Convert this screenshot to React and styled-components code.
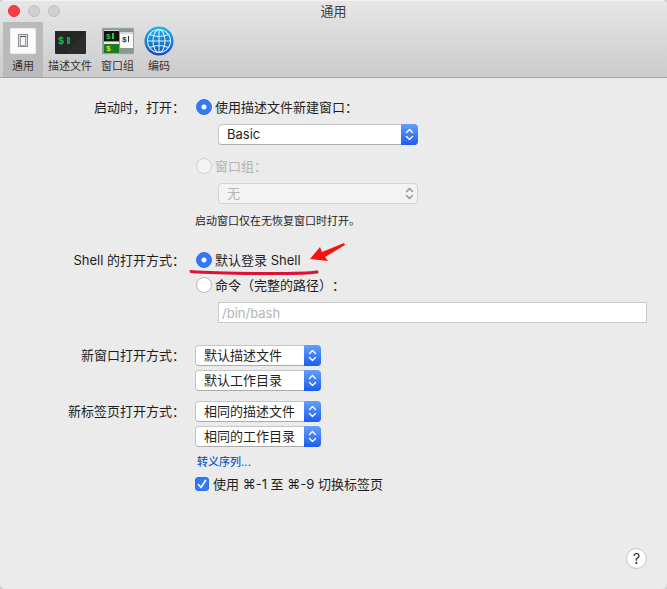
import React, { useState } from 'react';
import styled, { createGlobalStyle, css } from 'styled-components';

const GlobalStyle = createGlobalStyle`
    * {
        box-sizing: border-box;
    }

    body {
        margin: 0;
        background: #cfcfcf;
        color: #1f1f1f;
        font-family: Inter, "Noto Sans CJK SC", sans-serif;
        font-size: 13px;
        line-height: 16px;
        text-spacing-trim: space-all;
    }

    button, input, select {
        margin: 0;
        color: inherit;
        font: inherit;
    }
`;

const Window = styled.div`
    display: flex;
    flex-direction: column;
    min-height: 100vh;
    overflow: hidden;
    background: #ebebeb;
    border-radius: 5px;
`;

const Header = styled.header`
    background: linear-gradient(#e7e7e7, #cbcbcb);
    border-bottom: 1px solid #a3a3a3;
    box-shadow: inset 0 1px 0 #f3f3f3;
`;

const TitleBar = styled.div`
    display: grid;
    grid-template-columns: 1fr auto 1fr;
    align-items: center;
    height: 22px;
    padding: 0 8px;
`;

const Lights = styled.div`
    display: flex;
    gap: 8px;
`;

const Light = styled.button`
    width: 12px;
    height: 12px;
    padding: 0;
    background: ${props => props.$close ? '#fc3d46' : '#d0d0d0'};
    border: 1px solid ${props => props.$close ? '#e0343c' : '#bdbdbd'};
    border-radius: 50%;
`;

const Title = styled.h1`
    margin: 0;
    color: #3c3c3c;
    font-size: 13px;
    font-weight: 400;
`;

const Toolbar = styled.nav`
    display: flex;
    gap: 1px;
    padding: 0 3px;
`;

const ToolbarButton = styled.button`
    display: flex;
    flex-direction: column;
    align-items: center;
    min-width: 40px;
    height: 55px;
    padding: 3px 4px 0;
    background: ${props => props.$active ? '#bababa' : 'transparent'};
    border: 0;
    color: #333333;
    font-size: 11px;
    line-height: 18px;

    svg {
        display: block;
        flex: none;
    }
`;

const Form = styled.form`
    display: flex;
    flex: 1;
    flex-direction: column;
    padding: 21px 20px 20px 0;
`;

const Group = styled.div`
    display: grid;
    grid-template-columns: 185px 1fr;
    column-gap: 10px;
    margin-bottom: ${props => props.$tight ? '10px' : '22px'};
`;

const GroupLabel = styled.div`
    line-height: ${props => props.$tall ? '21px' : '16px'};
    text-align: right;
`;

const Fields = styled.div`
    display: flex;
    flex-direction: column;
    align-items: flex-start;
    gap: ${props => props.$tight ? '4px' : '9px'};
`;

const Choice = styled.label`
    position: relative;
    display: flex;
    align-items: center;
    gap: 3px;
    padding-left: 1px;
    color: ${props => props.$disabled ? '#b4b4b4' : 'inherit'};
`;

const Radio = styled.input`
    appearance: none;
    width: 16px;
    height: 16px;
    background: #ffffff;
    border: 1px solid #bcbcbc;
    border-radius: 50%;

    &:checked {
        background: radial-gradient(circle, #ffffff 2px, #3478f6 3px);
        border-color: #2f6fe8;
    }

    &:disabled {
        background: #f3f3f3;
        border-color: #d0d0d0;
    }
`;

const Indent = styled.div`
    align-self: stretch;
    padding: 0 0 ${props => props.$spaced ? '4px' : '0'} 23px;
`;

const SelectBox = styled.div`
    position: relative;
    width: ${props => props.$wide ? '200px' : '126px'};
    height: 21px;

    svg {
        position: absolute;
        top: 0;
        right: 0;
        pointer-events: none;
    }
`;

const SelectInput = styled.select`
    appearance: none;
    display: block;
    width: 100%;
    height: 21px;
    padding: 0 20px 2px 8px;
    background: #ffffff;
    border: 1px solid #c6c6c6;
    border-bottom-color: #ababab;
    border-radius: 4px;

    ${props => props.disabled && css`
        background: #f3f3f3;
        border-color: #d3d3d3;
        color: #b4b4b4;
        opacity: 1;
    `}
`;

const Note = styled.p`
    margin: 0;
    font-size: 11px;
    line-height: 17px;
`;

const PathInput = styled.input`
    display: block;
    width: 100%;
    height: 21px;
    padding: 0 3px;
    background: #ffffff;
    border: 1px solid #c8c8c8;

    &:disabled {
        color: #b4b4b4;
    }
`;

const Annotation = styled.svg`
    position: absolute;
    top: -12px;
    left: -6px;
    overflow: visible;
    pointer-events: none;
`;

const Extras = styled.div`
    display: flex;
    flex-direction: column;
    align-items: flex-start;
    gap: 6px;
    padding-top: 3px;
`;

const Link = styled.a`
    padding-left: 2px;
    color: #1b5bbf;
    font-size: 11px;
    font-weight: 500;
    text-decoration: none;
`;

const CheckLabel = styled.label`
    display: grid;
    grid-template-columns: 14px auto;
    align-items: center;
    column-gap: 4px;

    input, svg {
        grid-area: 1 / 1;
    }

    span {
        grid-column: 2;
    }

    svg {
        pointer-events: none;
    }
`;

const Checkbox = styled.input`
    appearance: none;
    width: 14px;
    height: 14px;
    background: #ffffff;
    border: 1px solid #bcbcbc;
    border-radius: 3px;

    &:checked {
        background: #3478f6;
        border-color: #2f6fe8;
    }
`;

const Footer = styled.footer`
    display: flex;
    justify-content: flex-end;
    margin-top: auto;
`;

const HelpButton = styled.button`
    width: 21px;
    height: 21px;
    padding: 0;
    background: #ffffff;
    border: 1px solid #c4c4c4;
    border-radius: 50%;
    font-size: 14px;
    line-height: 19px;
`;

const GeneralIcon = () => (
    <svg width="32" height="32" viewBox="0 0 32 32">
        <rect x="3" y="3" width="26" height="26" rx="1" fill="#fbfbfb" stroke="#c6c6c6" strokeWidth="0.6" />
        <rect x="11.5" y="9.5" width="9" height="12" fill="#d9dce0" stroke="#8d9095" />
        <rect x="13.5" y="11.5" width="5" height="9" fill="#f6f6f7" stroke="#8b8e93" strokeWidth="0.8" />
        <path d="M13 11.5h6" stroke="#55585d" />
    </svg>
);

const ProfileIcon = () => (
    <svg width="32" height="32" viewBox="0 0 32 32">
        <rect x="1" y="3" width="31" height="26" rx="1" fill="#262828" />
        <rect x="1" y="3" width="31" height="3" fill="#dedede" />
        <path d="M32 6v23H12z" fill="#3a3c3c" opacity="0.3" />
        <text x="4" y="19" fill="#22c04c" fontFamily="Liberation Mono, monospace" fontSize="10" fontWeight="700">$</text>
        <rect x="13" y="12" width="3" height="7" fill="#1a9c3c" />
    </svg>
);

const WindowGroupIcon = () => (
    <svg width="32" height="32" viewBox="0 0 32 32">
        <rect x="0" y="3" width="32" height="26" fill="#8a9794" stroke="#b4bab8" strokeWidth="0.6" />
        <rect x="2" y="5" width="15" height="11" fill="#101511" />
        <rect x="2" y="5" width="15" height="1" fill="#d7dad8" />
        <text x="4" y="14" fill="#25c44c" fontFamily="Liberation Mono, monospace" fontSize="8" fontWeight="700">$</text>
        <rect x="10" y="8" width="2" height="6" fill="#25c44c" />
        <rect x="2" y="17" width="15" height="11" fill="#1e7a1c" />
        <rect x="2" y="17" width="15" height="2" fill="#e8e9e8" />
        <text x="4" y="26" fill="#d5e83a" fontFamily="Liberation Mono, monospace" fontSize="8" fontWeight="700">$</text>
        <rect x="18" y="7" width="13" height="16" fill="#fafafa" />
        <rect x="18" y="7" width="13" height="2" fill="#d4d6d6" />
        <text x="20" y="17" fill="#333333" fontFamily="Liberation Mono, monospace" fontSize="8" fontWeight="700">$</text>
        <rect x="26" y="11" width="1" height="6" fill="#333333" />
    </svg>
);

const EncodingIcon = () => (
    <svg width="32" height="32" viewBox="0 0 32 32">
        <defs>
            <linearGradient id="globe" x1="0" y1="0" x2="0" y2="1">
                <stop offset="0" stopColor="#19b9ee" />
                <stop offset="1" stopColor="#1746bd" />
            </linearGradient>
        </defs>
        <circle cx="16" cy="16" r="14.5" fill="url(#globe)" />
        <g fill="none" stroke="#d9f1ff" strokeWidth="1.1">
            <circle cx="16" cy="16" r="11.5" />
            <ellipse cx="16" cy="16" rx="6" ry="11.5" />
            <path d="M16 4.5v23M4.5 16h23M6.5 9.5q9.5 4 19 0M6.5 22.5q9.5-4 19 0" />
        </g>
    </svg>
);

const Stepper = ({ disabled }) => (
    <svg width="17" height="21" viewBox="0 0 17 21">
        <defs>
            <linearGradient id="stepper" x1="0" y1="0" x2="0" y2="1">
                <stop offset="0" stopColor="#659ff8" />
                <stop offset="1" stopColor="#1c5cf1" />
            </linearGradient>
        </defs>
        {
            disabled ?
                null
            : <path d="M0 0h13a4 4 0 0 1 4 4v13a4 4 0 0 1-4 4H0z" fill="url(#stepper)" />
        }
        <path
            d="M5.5 8.5l3-3 3 3M5.5 12.500l3 3 3-3"
            fill="none"
            stroke={disabled ? '#8f8f8f' : '#ffffff'}
            strokeLinecap="round"
            strokeLinejoin="round"
            strokeWidth="1.4"
        />
    </svg>
);

const PopUp = ({ label, options, disabled, wide }) => (
    <SelectBox $wide={wide}>
        <SelectInput aria-label={label} disabled={disabled}>
            {options.map(option => <option key={option}>{option}</option>)}
        </SelectInput>
        <Stepper disabled={disabled} />
    </SelectBox>
);

const tabs = [
    { name: '通用', Icon: GeneralIcon },
    { name: '描述文件', Icon: ProfileIcon },
    { name: '窗口组', Icon: WindowGroupIcon },
    { name: '编码', Icon: EncodingIcon },
];

const App = () => {
    const [activeTab, setActiveTab] = useState('通用');
    const [shell, setShell] = useState('login');
    const [switchTabs, setSwitchTabs] = useState(true);

    return (
        <Window>
            <GlobalStyle />
            <Header>
                <TitleBar>
                    <Lights>
                        <Light $close aria-label="关闭" />
                        <Light aria-label="最小化" disabled />
                        <Light aria-label="缩放" disabled />
                    </Lights>
                    <Title>通用</Title>
                </TitleBar>
                <Toolbar>
                    {
                        tabs.map(({ name, Icon }) => (
                            <ToolbarButton
                                key={name}
                                type="button"
                                $active={activeTab === name}
                                onClick={() => setActiveTab(name)}
                            >
                                <Icon />
                                {name}
                            </ToolbarButton>
                        ))
                    }
                </Toolbar>
            </Header>
            <Form>
                <Group>
                    <GroupLabel>启动时，打开：</GroupLabel>
                    <Fields>
                        <Choice>
                            <Radio type="radio" name="startup" defaultChecked />
                            使用描述文件新建窗口：
                        </Choice>
                        <Indent $spaced>
                            <PopUp wide label="描述文件" options={['Basic']} />
                        </Indent>
                        <Choice $disabled>
                            <Radio type="radio" name="startup" disabled />
                            窗口组：
                        </Choice>
                        <Indent>
                            <PopUp wide disabled label="窗口组" options={['无']} />
                        </Indent>
                        <Note>启动窗口仅在无恢复窗口时打开。</Note>
                    </Fields>
                </Group>
                <Group>
                    <GroupLabel>Shell 的打开方式：</GroupLabel>
                    <Fields>
                        <Choice>
                            <Radio
                                type="radio"
                                name="shell"
                                checked={shell === 'login'}
                                onChange={() => setShell('login')}
                            />
                            默认登录 Shell
                            <Annotation width="158" height="36" viewBox="0 0 158 36">
                                <path
                                    d="M2 31.5C20 33 50 33.5 82 33.5S122 33 128 32"
                                    fill="none"
                                    stroke="#dc1237"
                                    strokeLinecap="round"
                                    strokeWidth="3"
                                />
                                <path d="M121 19l10-12 2 5 22-9 1 2-20 12 3 4z" fill="#f5130f" />
                            </Annotation>
                        </Choice>
                        <Choice>
                            <Radio
                                type="radio"
                                name="shell"
                                checked={shell === 'command'}
                                onChange={() => setShell('command')}
                            />
                            命令（完整的路径）：
                        </Choice>
                        <Indent>
                            <PathInput aria-label="命令路径" defaultValue="/bin/bash" disabled={shell === 'login'} />
                        </Indent>
                    </Fields>
                </Group>
                <Group $tight>
                    <GroupLabel $tall>新窗口打开方式：</GroupLabel>
                    <Fields $tight>
                        <PopUp label="新窗口描述文件" options={['默认描述文件', '相同的描述文件']} />
                        <PopUp label="新窗口工作目录" options={['默认工作目录', '相同的工作目录']} />
                    </Fields>
                </Group>
                <Group>
                    <GroupLabel $tall>新标签页打开方式：</GroupLabel>
                    <Fields $tight>
                        <PopUp label="新标签页描述文件" options={['相同的描述文件', '默认描述文件']} />
                        <PopUp label="新标签页工作目录" options={['相同的工作目录', '默认工作目录']} />
                        <Extras>
                            <Link href="#escape">转义序列...</Link>
                            <CheckLabel>
                                <Checkbox
                                    type="checkbox"
                                    checked={switchTabs}
                                    onChange={() => setSwitchTabs(!switchTabs)}
                                />
                                {
                                    switchTabs ?
                                        <svg width="14" height="14" viewBox="0 0 14 14">
                                            <path
                                                d="M3.5 7.5l2.5 3 4.5-7"
                                                fill="none"
                                                stroke="#ffffff"
                                                strokeLinecap="round"
                                                strokeLinejoin="round"
                                                strokeWidth="1.6"
                                            />
                                        </svg>
                                    : null
                                }
                                <span>使用 ⌘-1 至 ⌘-9 切换标签页</span>
                            </CheckLabel>
                        </Extras>
                    </Fields>
                </Group>
                <Footer>
                    <HelpButton type="button" aria-label="帮助">?</HelpButton>
                </Footer>
            </Form>
        </Window>
    );
};

export default App;
